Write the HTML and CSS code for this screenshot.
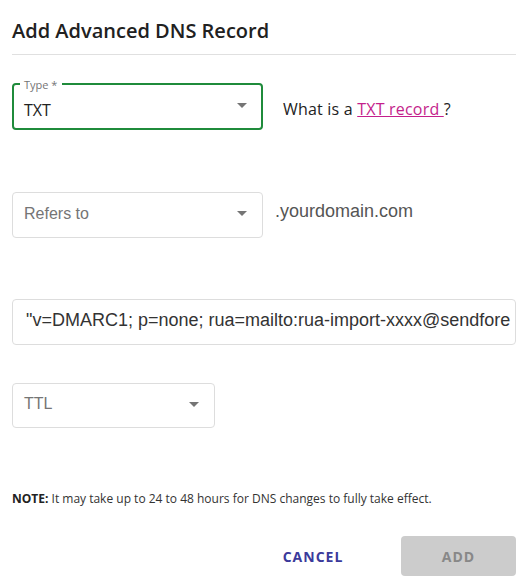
FILE: index.html
```html
<!DOCTYPE html>
<html lang="en">
<head>
<meta charset="utf-8">
<title>Add Advanced DNS Record</title>
<link rel="stylesheet" href="styles.css">
</head>
<body>
<div class="dialog">
  <h1 class="title">Add Advanced DNS Record</h1>
  <div class="divider"></div>

  <div class="row row-type">
    <div class="select select-type">
      <span class="floating-label">Type *</span>
      <span class="select-value">TXT</span>
      <span class="arrow arrow-type"></span>
    </div>
    <p class="help">What is a <a class="help-link" href="#">TXT record </a>?</p>
  </div>

  <div class="row row-refers">
    <div class="select select-refers">
      <span class="placeholder">Refers to</span>
      <span class="arrow"></span>
    </div>
    <span class="domain">.yourdomain.com</span>
  </div>

  <div class="value-box">
    <span class="value-text">"v=DMARC1; p=none; rua=mailto:rua-import-xxxx@sendfore</span>
  </div>

  <div class="select select-ttl">
    <span class="placeholder">TTL</span>
    <span class="arrow"></span>
  </div>

  <p class="note"><strong>NOTE:</strong> It may take up to 24 to 48 hours for DNS changes to fully take effect.</p>

  <div class="actions">
    <button class="btn btn-cancel" type="button">CANCEL</button>
    <button class="btn btn-add" type="button">ADD</button>
  </div>
</div>
</body>
</html>
```

FILE: styles.css
```css
body {
  margin: 0;
  background: #ffffff;
  font-family: "Open Sans", "Liberation Sans", sans-serif;
  color: #222222;
}

.dialog {
  width: 504px;
  padding: 17px 16px 0 12px;
}

.title {
  margin: 0;
  font-size: 20px;
  font-weight: 600;
  line-height: 28px;
  color: #212121;
}

.divider {
  height: 1px;
  margin-top: 9px;
  background: #e0e0e0;
}

.row {
  display: flex;
  align-items: flex-start;
}

.row-type {
  margin-top: 28px;
}

.row-refers {
  margin-top: 62px;
}

.select {
  position: relative;
  box-sizing: border-box;
  display: flex;
  align-items: center;
  justify-content: space-between;
  border: 1px solid #dddddd;
  border-radius: 4px;
  padding: 0 15px 0 11px;
  background: #ffffff;
}

.select-type {
  width: 251px;
  height: 47px;
  border: 2px solid #1f8b3b;
  align-items: flex-start;
  padding: 14px 14px 0 10px;
}

.select-refers {
  width: 251px;
  height: 46px;
}

.select-ttl {
  width: 203px;
  height: 45px;
  margin-top: 38px;
}

.floating-label {
  position: absolute;
  top: -6px;
  left: 6px;
  padding: 0 5px 0 4px;
  background: #ffffff;
  font-size: 11px;
  line-height: 12px;
  color: #757575;
}

.select-value {
  font-size: 16px;
  line-height: 22px;
  color: #222222;
}

.placeholder {
  font-family: "Liberation Sans", Arial, sans-serif;
  font-size: 16px;
  line-height: 18px;
  color: #757575;
  margin-bottom: 3px;
}

.arrow {
  width: 0;
  height: 0;
  border-left: 5px solid transparent;
  border-right: 5px solid transparent;
  border-top: 5px solid #757575;
  margin-bottom: 3px;
}

.arrow-type {
  margin-top: 4px;
  margin-bottom: 0;
}

.help {
  margin: 15px 0 0 20px;
  font-size: 16px;
  line-height: 22px;
  letter-spacing: 0.2px;
  color: #222222;
}

.help-link {
  color: #c41f8c;
  text-decoration: underline;
}

.domain {
  margin: 9px 0 0 12px;
  font-family: "Liberation Sans", Arial, sans-serif;
  font-size: 18px;
  line-height: 20px;
  color: #555555;
}

.value-box {
  box-sizing: border-box;
  width: 504px;
  height: 46px;
  margin-top: 61px;
  padding: 9px 0 0 13px;
  border: 1px solid #dddddd;
  border-radius: 4px;
  overflow: hidden;
  white-space: nowrap;
}

.value-text {
  font-family: "Liberation Sans", Arial, sans-serif;
  font-size: 18px;
  line-height: 20px;
  color: #333333;
}

.note {
  margin: 63px 0 0;
  font-size: 12px;
  line-height: 16px;
  color: #333333;
}

.note strong {
  font-weight: 700;
  color: #222222;
}

.actions {
  display: flex;
  justify-content: flex-end;
  gap: 43px;
  margin-top: 29px;
}

.btn {
  height: 40px;
  border: none;
  border-radius: 4px;
  font-family: "Open Sans", sans-serif;
  font-size: 14px;
  font-weight: 700;
  letter-spacing: 1px;
  padding: 0;
  cursor: pointer;
}

.btn-cancel {
  width: 90px;
  background: transparent;
  color: #3b3a9b;
}

.btn-add {
  width: 115px;
  background: #cccccc;
  color: #888888;
}
```
